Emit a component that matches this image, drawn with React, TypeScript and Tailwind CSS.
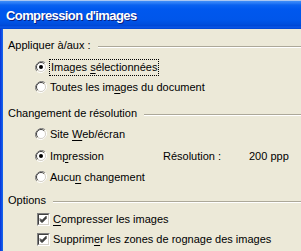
import React from "react";

const font = { fontFamily: '"Liberation Sans", Arial, sans-serif' };

function Radio({ checked }: { checked?: boolean }) {
  return (
    <svg width="12" height="12" viewBox="0 0 12 12" className="shrink-0">
      <path d="M10.2 1.8 A6 6 0 0 0 1.8 10.2" fill="none" stroke="#808080" strokeWidth="1" />
      <path d="M1.8 10.2 A6 6 0 0 0 10.2 1.8" fill="none" stroke="#ffffff" strokeWidth="1" />
      <circle cx="6" cy="6" r="4.6" fill="#ffffff" />
      <path d="M9.2 2.8 A4.5 4.5 0 0 0 2.8 9.2" fill="none" stroke="#404040" strokeWidth="1" />
      <path d="M2.8 9.2 A4.5 4.5 0 0 0 9.2 2.8" fill="none" stroke="#d4d0c8" strokeWidth="1" />
      {checked && <circle cx="6" cy="6" r="2" fill="#000" />}
    </svg>
  );
}

function Check() {
  return (
    <div className="w-[13px] h-[13px] shrink-0 border border-t-[#808080] border-l-[#808080] border-r-white border-b-white">
      <div className="w-full h-full border border-t-[#404040] border-l-[#404040] border-r-[#d4d0c8] border-b-[#d4d0c8] bg-white relative">
        <svg width="9" height="9" viewBox="0 0 9 9" className="absolute left-0 top-0">
          <path d="M1 3.5 L3 5.5 L7.5 1 M1 4.5 L3 6.5 L7.5 2 M1 5.5 L3 7.5 L7.5 3" stroke="#000" strokeWidth="1" fill="none" />
        </svg>
      </div>
    </div>
  );
}

function Header({ label, mt }: { label: string; mt: string }) {
  return (
    <div className={`flex items-center h-[20px] pl-[5px] ${mt}`}>
      <span className="whitespace-nowrap">{label}</span>
      <div className="flex-1 ml-[7px] mt-[3px]">
        <div className="h-px bg-[#aca899]" />
        <div className="h-px bg-white" />
      </div>
    </div>
  );
}

function U({ children }: { children: React.ReactNode }) {
  return <span className="underline underline-offset-[2px]">{children}</span>;
}

export default function App() {
  return (
    <div
      className="w-[301px] h-[251px] overflow-hidden bg-[#ece9d8] text-[11px] text-black leading-none"
      style={font}
    >
      <div className="h-[29px] bg-[linear-gradient(to_bottom,#a9c6f2_0px,#a9c6f2_1px,#3d8cf7_1px,#2a7bf6_3px,#0a62f0_5px,#0058ee_9px,#0056ea_20px,#004fde_24px,#0047d4_26px,#0b58ea_27px,#0044d0_29px)] flex items-center pl-[6px] pt-[2px]">
        <span className="text-white font-bold text-[13px] tracking-[-0.6px] [text-shadow:1px_1px_0_#0a1f80]">
          Compression d'images
        </span>
      </div>
      <div className="flex h-[222px]">
        <div className="w-[3px] bg-[linear-gradient(to_right,#0831d9,#166aee)]" />
        <div className="flex-1 flex flex-col">
          <Header label="Appliquer à/aux :" mt="mt-[6px]" />
          <div className="flex items-center h-[20px] pl-[32px] mt-[2px]">
            <Radio checked />
            <div className="ml-[2px] px-[1px] h-[17px] flex items-center border border-dotted border-black">
              <span>
                Images <U>s</U>électionnées
              </span>
            </div>
          </div>
          <div className="flex items-center h-[20px] pl-[32px]">
            <Radio />
            <span className="ml-[3px]">
              Toutes les im<U>a</U>ges du document
            </span>
          </div>
          <Header label="Changement de résolution" mt="mt-[6px]" />
          <div className="flex items-center h-[20px] pl-[32px] mt-[1px]">
            <Radio />
            <span className="ml-[3px]">
              Site <U>W</U>eb/écran
            </span>
          </div>
          <div className="flex items-center h-[20px] pl-[32px] mt-[2px]">
            <Radio checked />
            <span className="ml-[3px] w-[113px]">
              Im<U>p</U>ression
            </span>
            <span className="w-[86px]">Résolution :</span>
            <span>200 ppp</span>
          </div>
          <div className="flex items-center h-[20px] pl-[32px] mt-[1px]">
            <Radio />
            <span className="ml-[3px]">
              Aucu<U>n</U> changement
            </span>
          </div>
          <Header label="Options" mt="mt-[3px]" />
          <div className="flex items-center h-[20px] pl-[34px] mt-[-1px]">
            <Check />
            <span className="ml-[3px]">
              <U>C</U>ompresser les images
            </span>
          </div>
          <div className="flex items-center h-[20px] pl-[34px]">
            <Check />
            <span className="ml-[3px]">
              Supprim<U>e</U>r les zones de rognage des images
            </span>
          </div>
        </div>
      </div>
    </div>
  );
}
